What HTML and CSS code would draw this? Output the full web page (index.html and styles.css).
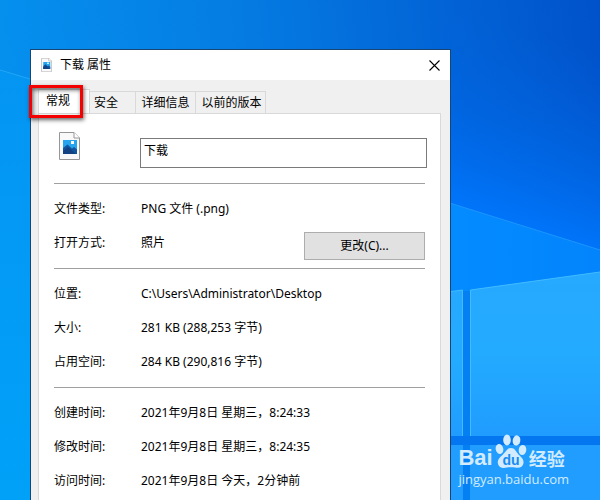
FILE: index.html
```html
<!DOCTYPE html>
<html lang="zh-CN">
<head>
<meta charset="utf-8">
<title>下载 属性</title>
<link rel="stylesheet" href="styles.css">
</head>
<body>
<svg class="wallpaper" viewBox="0 0 600 500" preserveAspectRatio="xMidYMid slice" aria-hidden="true">
  <defs>
    <linearGradient id="sky" gradientUnits="userSpaceOnUse" x1="0" y1="60" x2="600" y2="0">
      <stop offset="0" stop-color="#0590ee"/><stop offset=".4" stop-color="#057ce2"/><stop offset=".75" stop-color="#0263d6"/><stop offset="1" stop-color="#0152ca"/>
    </linearGradient>
    <linearGradient id="deep" gradientUnits="userSpaceOnUse" x1="560" y1="40" x2="500" y2="225">
      <stop offset="0" stop-color="#0060dc" stop-opacity="0"/><stop offset=".5" stop-color="#0066e4" stop-opacity=".7"/><stop offset="1" stop-color="#0076fc"/>
    </linearGradient>
    <linearGradient id="left" x1="0" y1="0" x2="0" y2="1">
      <stop offset="0" stop-color="#0495f2"/><stop offset="1" stop-color="#01a1f8"/>
    </linearGradient>
    <linearGradient id="beam" x1="0" y1="0" x2="1" y2="0">
      <stop offset="0" stop-color="#048cff"/><stop offset="1" stop-color="#0384fc"/>
    </linearGradient>
    <linearGradient id="pane" x1="0" y1="0" x2="0" y2="1">
      <stop offset="0" stop-color="#26a9ff"/><stop offset=".5" stop-color="#23abff"/><stop offset="1" stop-color="#209cff"/>
    </linearGradient>
  </defs>
  <path d="M0 0H600V500H0z" fill="url(#sky)"/>
  <path d="M440 0H600V270H440z" fill="url(#deep)"/>
  <path d="M0 70L40 82V500H0z" fill="url(#left)"/>
  <path d="M0 70L40 82" stroke="#22a6f6"/>
  <path d="M440 200L600 250V500H440z" fill="url(#beam)"/>
  <path d="M440 200L600 250" stroke="#1c95ff"/>
  <path d="M440 291H600V500H440z" fill="#0580f2"/>
  <path d="M440 291H470L600 273V260H440z" fill="url(#beam)"/>
  <path d="M440 293L463 290V436H440z" fill="url(#pane)"/>
  <path d="M470 290L600 272V436H470z" fill="url(#pane)"/>
  <path d="M440 445H463V500H440zM470 445H600V500H470z" fill="#209dff"/>
  <path d="M440 293L462.500 290V436M470.500 436V290L600 272" fill="none" stroke="#42bcff"/>
  <path d="M440 436H600V445H440z" fill="#0476f0"/>
</svg>

<main class="dialog">
  <header class="titlebar">
    <svg class="title-icon" viewBox="0 0 21 28" aria-hidden="true"><use href="#picture-file"/></svg>
    <h1>下载 属性</h1>
    <button class="close" type="button" aria-label="关闭">
      <svg viewBox="0 0 11 11" aria-hidden="true"><path d="M.5.5L10.500 10.500M10.500.5L.5 10.500" stroke="#000" stroke-width="1.100"/></svg>
    </button>
  </header>

  <nav class="tabs" role="tablist">
    <button class="tab selected" type="button" role="tab" aria-selected="true">常规<span class="highlight"></span></button>
    <button class="tab security" type="button" role="tab">安全</button>
    <button class="tab details" type="button" role="tab">详细信息</button>
    <button class="tab versions" type="button" role="tab">以前的版本</button>
  </nav>

  <section class="panel">
    <div class="file">
      <svg class="file-icon" viewBox="0 0 21 28" aria-hidden="true">
        <g id="picture-file">
          <path d="M.5.5H15L20.500 6V27.500H.5z" fill="#f9f9f9" stroke="#969696"/>
          <path d="M15 .5V6H20.500" fill="#fff" stroke="#969696"/>
          <path d="M4 8H18V22H4z" fill="#24a5ee"/>
          <path d="M4 16L8.500 12.500L13 16.500L15 15L18 17.500V22H4z" fill="#12559f"/>
          <path d="M4 19L9 15L17 22H4z" fill="#134282"/>
          <path d="M12 9H15V12H12z" fill="#fff"/>
        </g>
      </svg>
      <input class="name" type="text" value="下载" aria-label="文件名">
    </div>
    <dl>
      <div class="row"><dt>文件类型:</dt><dd>PNG 文件 (.png)</dd></div>
      <div class="row"><dt>打开方式:</dt><dd>照片</dd><dd class="action"><button class="change" type="button">更改(C)...</button></dd></div>
    </dl>
    <dl>
      <div class="row"><dt>位置:</dt><dd>C:\Users\Administrator\Desktop</dd></div>
      <div class="row"><dt>大小:</dt><dd>281 KB (288,253 字节)</dd></div>
      <div class="row"><dt>占用空间:</dt><dd>284 KB (290,816 字节)</dd></div>
    </dl>
    <dl>
      <div class="row"><dt>创建时间:</dt><dd>2021年9月8日 星期三，8:24:33</dd></div>
      <div class="row"><dt>修改时间:</dt><dd>2021年9月8日 星期三，8:24:35</dd></div>
      <div class="row"><dt>访问时间:</dt><dd>2021年9月8日 今天，2分钟前</dd></div>
    </dl>
  </section>
</main>

<aside class="watermark">
  <div class="brand">
    <span class="bai">Bai</span>
    <svg class="paw" viewBox="0 0 32 36" role="img" aria-label="du">
      <g fill="currentColor">
        <ellipse cx="4.500" cy="15" rx="3.800" ry="5" transform="rotate(-12 4.500 15)"/>
        <ellipse cx="12" cy="6" rx="3.800" ry="5.400"/>
        <ellipse cx="21.500" cy="6.500" rx="3.800" ry="5.200" transform="rotate(10 21.500 6.500)"/>
        <ellipse cx="27.500" cy="16" rx="3.800" ry="5" transform="rotate(8 27.500 16)"/>
        <path d="M16 14C12 14 11 18 7.500 21C4 24 2 26 3 30C4 34 8 34.500 12 33.500C15 33 17 33 20 33.500C25 34.500 28 33 28.500 29C29 25 26 23 23.500 20.500C21 17.500 20 14 16 14z"/>
      </g>
      <text class="du" x="16" y="31" text-anchor="middle">du</text>
    </svg>
    <span class="jingyan">经验</span>
  </div>
  <div class="site">jingyan.baidu.com</div>
</aside>
</body>
</html>
```
FILE: styles.css
```css
* {
  box-sizing: border-box;
}

body {
  position: relative;
  display: flex;
  height: 100vh;
  margin: 0;
  padding: 49px calc(25% - 1px) 0 30px;
  overflow: hidden;
  background: #058ff0;
  color: #000;
  font: 12px/18px "Noto Sans", "Noto Sans CJK SC", sans-serif;
}

button,
input {
  margin: 0;
  font: inherit;
  color: inherit;
}

.wallpaper {
  position: absolute;
  inset: 0;
  width: 100%;
  height: 100%;
}

.dialog {
  position: relative;
  display: flex;
  flex: 1;
  flex-direction: column;
  min-height: max-content;
  border: 1px solid #174674;
  background: #f0f0f0;
}

.titlebar {
  display: flex;
  align-items: center;
  height: 30px;
  padding: 0 10px;
  background: #fff;
}

.title-icon {
  width: 11px;
  height: 14px;
}

h1 {
  flex: 1;
  margin: 0 0 0 8px;
  font: inherit;
}

.close {
  display: flex;
  padding: 0;
  border: 0;
  background: none;
}

.close svg {
  width: 11px;
  height: 11px;
}

.tabs {
  display: flex;
  align-items: flex-end;
  height: 33px;
  padding-left: 7px;
}

.tab {
  position: relative;
  height: 22px;
  padding: 0;
  border: 1px solid #d9d9d9;
  border-width: 1px 1px 0 0;
  background: #f0f0f0;
  text-align: center;
}

.tab.selected {
  width: 52px;
  height: 24px;
  padding: 0 12px 2px 7px;
  border-left-width: 1px;
  background: #fff;
  text-align: left;
}

.tab.security {
  width: 46px;
  padding-left: 4px;
  text-align: left;
}

.tab.details {
  width: 60px;
}

.tab.versions {
  width: 70px;
  padding-left: 2px;
}

.highlight {
  position: absolute;
  z-index: 1;
  top: -5px;
  left: -10px;
  width: 54px;
  height: 33px;
  border: 3px solid #f40000;
  box-shadow: 1px 2px 4px rgba(0, 0, 0, .6), inset 1px 2px 4px rgba(0, 0, 0, .6);
}

.panel {
  flex: 1;
  margin: 0 9px 0 7px;
  border: 1px solid #d9d9d9;
  border-bottom: 0;
  background: #fff;
}

.file {
  display: flex;
  align-items: flex-end;
  padding: 18px 13px 15px 20px;
}

.file-icon {
  align-self: flex-start;
  width: 21px;
  height: 28px;
}

.name {
  flex: 1;
  min-width: 0;
  height: 30px;
  margin: 6px 0 0 60px;
  padding: 0 3px 6px;
  border: 1px solid #7a7a7a;
  border-radius: 0;
  background: #fff;
}

dl {
  margin: 0 15px;
  padding: 8px 0;
  border-top: 1px solid #a0a0a0;
}

.row {
  display: flex;
  align-items: center;
  height: 34px;
}

dt {
  width: 87px;
}

dd {
  margin: 0;
}

.action {
  align-self: flex-end;
  margin-left: auto;
}

.change {
  display: block;
  width: 121px;
  height: 28px;
  padding: 0;
  border: 1px solid #adadad;
  background: #e1e1e1;
}

.watermark {
  position: absolute;
  right: 31px;
  bottom: 12px;
  color: #d3ebff;
}

.brand {
  display: flex;
  align-items: flex-end;
  gap: 2px;
}

.bai {
  font: bold 22px/24px "Liberation Sans", sans-serif;
}

.paw {
  width: 32px;
  height: 36px;
}

.du {
  font: bold 14px "Liberation Sans", sans-serif;
  fill: #168bf2;
}

.jingyan {
  font: bold 18px/24px "Noto Sans CJK SC", sans-serif;
}

.site {
  font: 13px/18px "Open Sans", sans-serif;
}
```
